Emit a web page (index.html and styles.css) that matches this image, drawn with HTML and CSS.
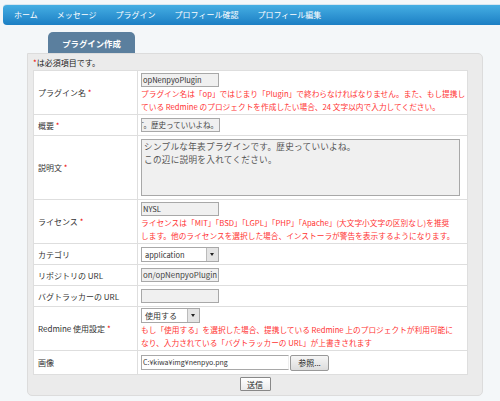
FILE: index.html
```html
<!DOCTYPE html>
<html lang="ja">
<head>
<meta charset="utf-8">
<link rel="stylesheet" href="styles.css">
</head>
<body>
<nav class="nav">
  <a class="nav-item">ホーム</a>
  <a class="nav-item">メッセージ</a>
  <a class="nav-item">プラグイン</a>
  <a class="nav-item">プロフィール確認</a>
  <a class="nav-item">プロフィール編集</a>
</nav>
<div class="tab">プラグイン作成</div>
<div class="panel">
  <div class="note"><span class="req">*</span>は必須項目です。</div>
  <table class="form">
    <colgroup><col class="c-label"><col class="c-field"></colgroup>
    <tr class="r-name">
      <th>プラグイン名 <span class="req">*</span></th>
      <td><div class="input">opNenpyoPlugin</div>
        <div class="err">プラグイン名は「op」ではじまり「Plugin」で終わらなければなりません。また、もし提携し<br>ている Redmine のプロジェクトを作成したい場合、24 文字以内で入力してください。</div></td>
    </tr>
    <tr class="r-one">
      <th>概要 <span class="req">*</span></th>
      <td><div class="input clip"><span>す。歴史っていいよね。</span></div></td>
    </tr>
    <tr class="r-desc">
      <th>説明文 <span class="req">*</span></th>
      <td><div class="textarea">シンプルな年表プラグインです。歴史っていいよね。<br>この辺に説明を入れてください。</div></td>
    </tr>
    <tr class="r-name">
      <th>ライセンス <span class="req">*</span></th>
      <td><div class="input">NYSL</div>
        <div class="err">ライセンスは「MIT」「BSD」「LGPL」「PHP」「Apache」(大文字小文字の区別なし)を推奨<br>します。他のライセンスを選択した場合、インストーラが警告を表示するようになります。</div></td>
    </tr>
    <tr class="r-one">
      <th>カテゴリ</th>
      <td><div class="select wide"><span class="sel-text">application</span><span class="arrow"></span></div></td>
    </tr>
    <tr class="r-one">
      <th>リポジトリの URL</th>
      <td><div class="input clip url"><span>on/opNenpyoPlugin</span></div></td>
    </tr>
    <tr class="r-one">
      <th>バグトラッカーの URL</th>
      <td><div class="input"></div></td>
    </tr>
    <tr class="r-name">
      <th>Redmine 使用設定 <span class="req">*</span></th>
      <td><div class="select narrow"><span class="sel-text">使用する</span><span class="arrow"></span></div>
        <div class="err">もし「使用する」を選択した場合、提携している Redmine 上のプロジェクトが利用可能に<br>なり、入力されている「バグトラッカーの URL」が上書きされます</div></td>
    </tr>
    <tr class="r-img">
      <th>画像</th>
      <td><div class="file"><div class="file-box">C:¥kiwa¥img¥nenpyo.png</div><div class="btn browse">参照...</div></div></td>
    </tr>
  </table>
  <div class="submit-row"><div class="btn submit">送信</div></div>
</div>
</body>
</html>
```
FILE: styles.css
```css
html, body {
  margin: 0;
  padding: 0;
}
body {
  background: #f4f7f9;
  font-family: "Noto Sans CJK JP", "Noto Sans", sans-serif;
  color: #222;
  width: 500px;
  height: 401px;
  overflow: hidden;
}
.nav {
  margin: 4px 0 0 3px;
  height: 20px;
  border-top: 1px solid #d6e6f0;
  background: linear-gradient(#45aee3, #1c7fc4);
  border-radius: 4px 0 0 4px;
  display: flex;
  align-items: center;
  gap: 19px;
  padding-left: 11px;
}
.nav-item {
  color: #fff;
  font-size: 8px;
  line-height: 20px;
}
.tab {
  margin: 7px 0 0 48px;
  width: 87px;
  height: 21px;
  background: #5b7f9e;
  border-radius: 5px 5px 0 0;
  color: #fff;
  font-weight: bold;
  font-size: 8.4px;
  display: flex;
  align-items: center;
  justify-content: center;
}
.panel {
  margin-left: 27px;
  width: 444px;
  height: 341px;
  background: #ebebeb;
  border: 1px solid #dcdcdc;
  border-radius: 0 5px 5px 5px;
  padding: 0 5px;
  box-sizing: content-box;
}
.note {
  font-size: 8px;
  line-height: 15px;
  padding-top: 1px;
}
.req {
  color: #e00;
}
.form {
  border-collapse: collapse;
  table-layout: fixed;
  width: 435px;
  background: #fff;
  border: 1px solid #d8d8d8;
}
.c-label { width: 104px; }
.form th, .form td {
  border: 1px solid #dedede;
  padding: 0 0 0 3px;
  vertical-align: middle;
}
.form th {
  text-align: left;
  font-weight: normal;
  font-size: 8px;
  padding-left: 4px;
  color: #333;
  white-space: nowrap;
}
.r-name { height: 44px; }
.r-one { height: 21px; }
.r-desc { height: 64px; }
.r-img { height: 24px; }
.input {
  width: 75px;
  height: 12px;
  border: 1px solid #a8a8a8;
  background: #f0f0f0;
  font-size: 7.5px;
  line-height: 12px;
  color: #333;
  padding-left: 1px;
  white-space: nowrap;
  overflow: hidden;
}
.clip {
  display: flex;
  justify-content: flex-end;
  padding: 0 1px 0 0;
  width: 76px;
  color: #444;
}
.clip.url {
  font-size: 7.9px;
  justify-content: flex-start;
  padding: 0 0 0 1px;
  width: 75px;
}
.clip span {
  flex: none;
}
.err {
  color: #f33;
  font-size: 7.7px;
  line-height: 13px;
  white-space: nowrap;
}
.textarea {
  border: 1px solid #a8a8a8;
  background: #f0f0f0;
  color: #555;
  font-size: 8.6px;
  letter-spacing: 0.3px;
  line-height: 13px;
  padding: 0 0 0 2px;
  box-sizing: border-box;
  height: 57px;
  width: 319px;
}
.select {
  display: flex;
  align-items: stretch;
  height: 13px;
  border: 1px solid #a8a8a8;
  background: #fff;
  font-size: 7.5px;
  line-height: 13px;
}
.select.wide { width: 76px; }
.select.narrow { width: 57px; font-size: 8px; }
.sel-text {
  flex: 1;
  padding-left: 3px;
  color: #333;
}
.arrow {
  width: 11px;
  border-left: 1px solid #bbb;
  background: #e4e4e4;
  position: relative;
}
.arrow::after {
  content: "";
  position: absolute;
  left: 3px;
  top: 5px;
  border-left: 2.5px solid transparent;
  border-right: 2.5px solid transparent;
  border-top: 3px solid #222;
}
.file {
  display: flex;
  align-items: center;
  gap: 1px;
}
.file-box {
  width: 145px;
  height: 13px;
  border: 1px solid #a8a8a8;
  border-right-color: #eee;
  background: #fff;
  font-size: 7px;
  line-height: 13px;
  color: #333;
  padding-left: 1px;
}
.btn {
  border: 1px solid #999;
  background: linear-gradient(#f6f6f6, #dcdcdc);
  border-radius: 2px;
  font-size: 8px;
  display: flex;
  align-items: center;
  justify-content: center;
  color: #222;
}
.browse {
  width: 37px;
  height: 14px;
}
.submit-row {
  display: flex;
  justify-content: center;
  padding-top: 2px;
}
.submit {
  width: 29px;
  height: 12px;
  background: linear-gradient(#fff, #eaeaea);
  border-color: #888;
  border-radius: 1px;
}
```
